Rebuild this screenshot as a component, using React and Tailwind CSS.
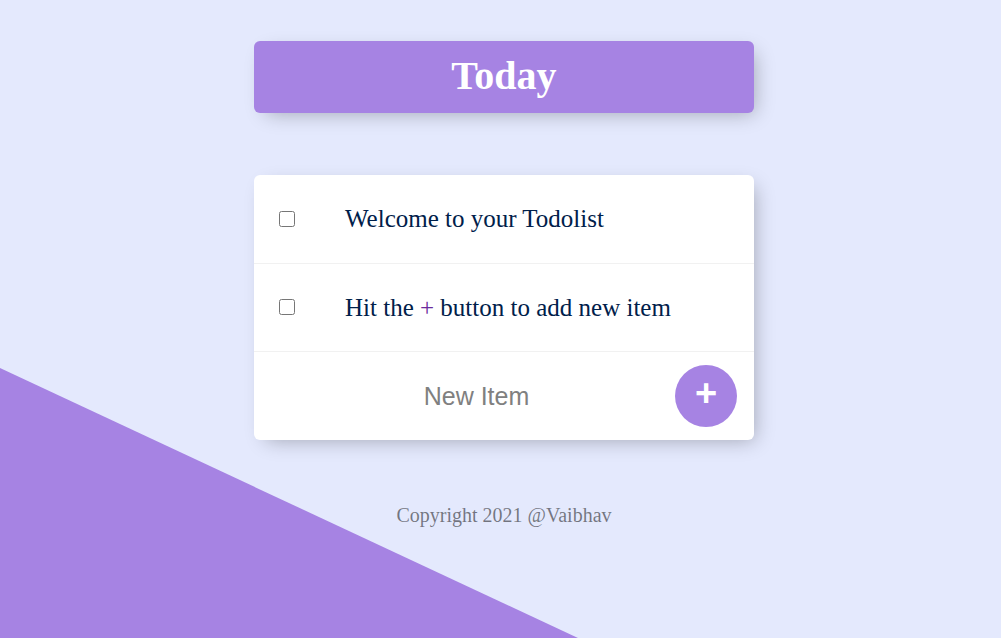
import React from 'react'

const items = [
  { id: 1, text: <>Welcome to your Todolist</> },
  { id: 2, text: <>Hit the <span className="text-[#6a2a9c]">+</span> button to add new item</> },
]

const App = () => {
  return (
    <div className="relative h-[638px] w-full overflow-hidden bg-[#E4E9FD] font-['Liberation_Serif',serif]">
      {/* diagonal background shape */}
      <div className="absolute inset-0 bg-[#A683E3] [clip-path:polygon(0_368px,578px_638px,0_638px)]"></div>

      <div className="relative flex flex-col items-center pt-[41px] pl-[7px]">
        <div className="w-[500px] h-[72px] rounded-[6px] bg-[#A683E3] shadow-[6px_6px_19px_-6px_rgba(0,0,0,0.3)] flex items-center justify-center">
          <h1 className="text-[40px] font-bold text-white leading-none pb-[2px]">Today</h1>
        </div>

        <div className="mt-[62px] w-[500px] rounded-[6px] bg-white shadow-[6px_6px_19px_-6px_rgba(0,0,0,0.3)]">
          {items.map((item) => (
            <div key={item.id} className="h-[88.5px] flex items-center border-b border-[#F1F1F1]">
              <input type="checkbox" className="ml-[25px] w-4 h-4 shrink-0" />
              <p className="pl-[50px] text-[25px] text-[#00204a]">{item.text}</p>
            </div>
          ))}
          <form className="h-[88px] flex items-center pl-[27px]" onSubmit={(e) => e.preventDefault()}>
            <input
              type="text"
              placeholder="New Item"
              className="w-[391px] h-[75px] text-center text-[25px] font-['Liberation_Sans',sans-serif] placeholder:text-[#808080] outline-none"
            />
            <button
              type="submit"
              className="ml-[3px] w-[62px] h-[62px] rounded-full bg-[#A683E3] text-white text-[38px] font-bold leading-none pb-[6px] font-['Liberation_Sans',sans-serif] flex items-center justify-center"
            >
              +
            </button>
          </form>
        </div>

        <footer className="mt-[60px] text-[20px] text-[rgba(0,0,0,0.5)] text-center">
          Copyright 2021 @Vaibhav
        </footer>
      </div>
    </div>
  )
}

export default App
